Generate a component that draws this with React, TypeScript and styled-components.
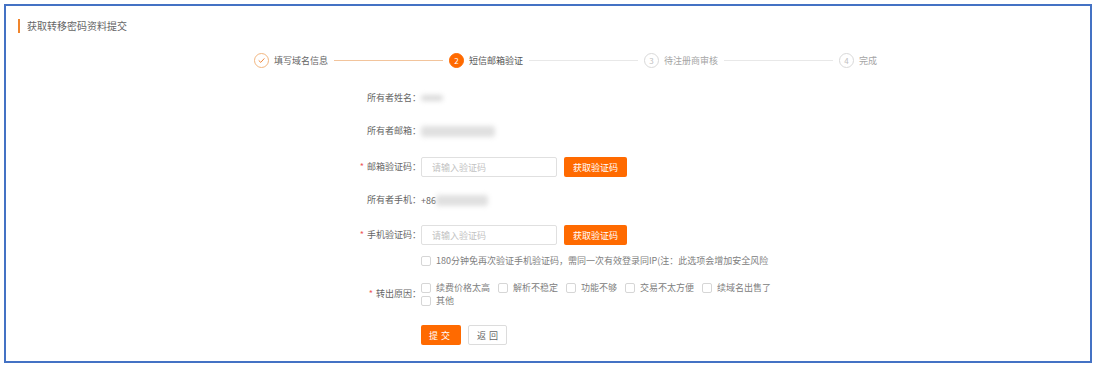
import React from "react";
import styled, { createGlobalStyle } from "styled-components";

const Global = createGlobalStyle`
  html, body { margin: 0; padding: 0; background: #fff; }
  body { font-family: "Noto Sans CJK SC", "Noto Sans", sans-serif; }
  * { box-sizing: border-box; }
`;

const Page = styled.div`
  padding: 4px 0 0 4px;
`;

const Frame = styled.div`
  width: 1088px;
  height: 359px;
  border: 2px solid #4472c4;
  background: #fff;
  padding: 13px 0 0 12px;
`;

const Title = styled.div`
  display: flex;
  align-items: center;
  height: 14px;
  border-left: 2px solid #f0852d;
  padding-left: 7px;
  font-size: 10px;
  line-height: 14px;
  color: #666;
`;

const Steps = styled.div`
  display: flex;
  align-items: center;
  height: 15px;
  margin-top: 20px;
  padding-left: 236px;
`;

const Step = styled.div`
  display: flex;
  align-items: center;
  gap: 5px;
`;

type StepState = "done" | "active" | "todo";

const Circle = styled.div<{ $state: StepState }>`
  width: 15px;
  height: 15px;
  border-radius: 50%;
  display: flex;
  align-items: center;
  justify-content: center;
  font-size: 8px;
  line-height: 1;
  border: 1px solid
    ${(p) => (p.$state === "done" ? "#f2b680" : p.$state === "active" ? "#ff6a00" : "#d9d9d9")};
  background: ${(p) => (p.$state === "active" ? "#ff6a00" : "#fff")};
  color: ${(p) => (p.$state === "active" ? "#fff" : "#c0c0c0")};
`;

const StepLabel = styled.span<{ $state: StepState }>`
  font-size: 9px;
  line-height: 15px;
  white-space: nowrap;
  color: ${(p) => (p.$state === "todo" ? "#a5a5a5" : p.$state === "active" ? "#555" : "#666")};
`;

const Connector = styled.div<{ $done?: boolean }>`
  width: 109px;
  height: 1px;
  margin: 0 6px;
  background: ${(p) => (p.$done ? "#f2c49c" : "#e8e8e8")};
`;

const Form = styled.div`
  margin-left: 333px;
  display: flex;
  flex-direction: column;
`;

const Row = styled.div<{ $mt: number; $h?: number }>`
  display: flex;
  align-items: center;
  margin-top: ${(p) => p.$mt}px;
  min-height: ${(p) => p.$h ?? 20}px;
`;

const Label = styled.div`
  width: 70px;
  flex: none;
  text-align: right;
  font-size: 9px;
  line-height: 20px;
  color: #666;
  white-space: nowrap;
`;

const Star = styled.span`
  color: #ee5a5a;
  margin-right: 3px;
`;

const Value = styled.div`
  display: flex;
  align-items: center;
  font-size: 9px;
  color: #666;
`;

const Blur = styled.span<{ $w: number; $h: number; $c?: string }>`
  display: inline-block;
  width: ${(p) => p.$w}px;
  height: ${(p) => p.$h}px;
  background: ${(p) => p.$c ?? "#dadada"};
  border-radius: 3px;
  filter: blur(2.5px);
`;

const Input = styled.input`
  width: 136px;
  height: 20px;
  border: 1px solid #e0e0e0;
  border-radius: 2px;
  padding: 0 0 0 10px;
  font-size: 9px;
  font-family: inherit;
  color: #555;
  outline: none;
  &::placeholder { color: #c2c2c2; }
`;

const OrangeButton = styled.button<{ $w: number; $spacing?: number }>`
  width: ${(p) => p.$w}px;
  height: 20px;
  border: none;
  border-radius: 2px;
  background: #ff6a00;
  color: #fff;
  font-size: 9px;
  font-family: inherit;
  letter-spacing: ${(p) => p.$spacing ?? 0}px;
  padding: 0;
  cursor: pointer;
`;

const CodeButton = styled(OrangeButton)`
  margin-left: 7px;
`;

const PlainButton = styled.button`
  width: 39px;
  height: 20px;
  margin-left: 7px;
  border: 1px solid #dcdcdc;
  border-radius: 2px;
  background: #fff;
  color: #666;
  font-size: 9px;
  font-family: inherit;
  letter-spacing: 3px;
  padding: 0 0 0 3px;
  cursor: pointer;
`;

const Check = styled.label`
  display: flex;
  align-items: center;
  gap: 5px;
  height: 13px;
  font-size: 9px;
  color: #808080;
  white-space: nowrap;
`;

const Box = styled.span`
  width: 10px;
  height: 10px;
  border: 1px solid #d6d6d6;
  border-radius: 2px;
  background: #fff;
  flex: none;
`;

const Content = styled.div`
  display: flex;
  align-items: center;
`;

const Reasons = styled.div`
  display: flex;
  flex-wrap: wrap;
  width: 360px;
  column-gap: 8px;
`;

const CheckIcon = () => (
  <svg width="9" height="9" viewBox="0 0 10 10" fill="none">
    <path d="M2.2 5.2 L4.2 7.1 L7.9 3" stroke="#f0873a" strokeWidth="1.1" strokeLinecap="round" strokeLinejoin="round" />
  </svg>
);

const reasons = ["续费价格太高", "解析不稳定", "功能不够", "交易不太方便", "续域名出售了", "其他"];

export default function App() {
  return (
    <>
      <Global />
      <Page>
        <Frame>
          <Title>获取转移密码资料提交</Title>
          <Steps>
            <Step>
              <Circle $state="done"><CheckIcon /></Circle>
              <StepLabel $state="done">填写域名信息</StepLabel>
            </Step>
            <Connector $done />
            <Step>
              <Circle $state="active">2</Circle>
              <StepLabel $state="active">短信邮箱验证</StepLabel>
            </Step>
            <Connector />
            <Step>
              <Circle $state="todo">3</Circle>
              <StepLabel $state="todo">待注册商审核</StepLabel>
            </Step>
            <Connector />
            <Step>
              <Circle $state="todo">4</Circle>
              <StepLabel $state="todo">完成</StepLabel>
            </Step>
          </Steps>
          <Form>
            <Row $mt={20}>
              <Label>所有者姓名：</Label>
              <Value><Blur $w={22} $h={6} /></Value>
            </Row>
            <Row $mt={13}>
              <Label>所有者邮箱：</Label>
              <Value><Blur $w={74} $h={11} $c="#e0e0e0" /></Value>
            </Row>
            <Row $mt={16}>
              <Label><Star>*</Star>邮箱验证码：</Label>
              <Content>
                <Input placeholder="请输入验证码" />
                <CodeButton $w={63}>获取验证码</CodeButton>
              </Content>
            </Row>
            <Row $mt={13}>
              <Label>所有者手机：</Label>
              <Value>+86<Blur $w={52} $h={11} $c="#e0e0e0" /></Value>
            </Row>
            <Row $mt={15}>
              <Label><Star>*</Star>手机验证码：</Label>
              <Content>
                <Input placeholder="请输入验证码" />
                <CodeButton $w={63}>获取验证码</CodeButton>
              </Content>
            </Row>
            <Row $mt={9} $h={13}>
              <Label />
              <Check><Box />180分钟免再次验证手机验证码，需同一次有效登录同IP(注：此选项会增加安全风险</Check>
            </Row>
            <Row $mt={14} $h={26}>
              <Label><Star>*</Star>转出原因：</Label>
              <Reasons>
                {reasons.map((r) => (
                  <Check key={r}><Box />{r}</Check>
                ))}
              </Reasons>
            </Row>
            <Row $mt={18}>
              <Label />
              <Content>
                <OrangeButton $w={40} $spacing={3}>提交</OrangeButton>
                <PlainButton>返回</PlainButton>
              </Content>
            </Row>
          </Form>
        </Frame>
      </Page>
    </>
  );
}
